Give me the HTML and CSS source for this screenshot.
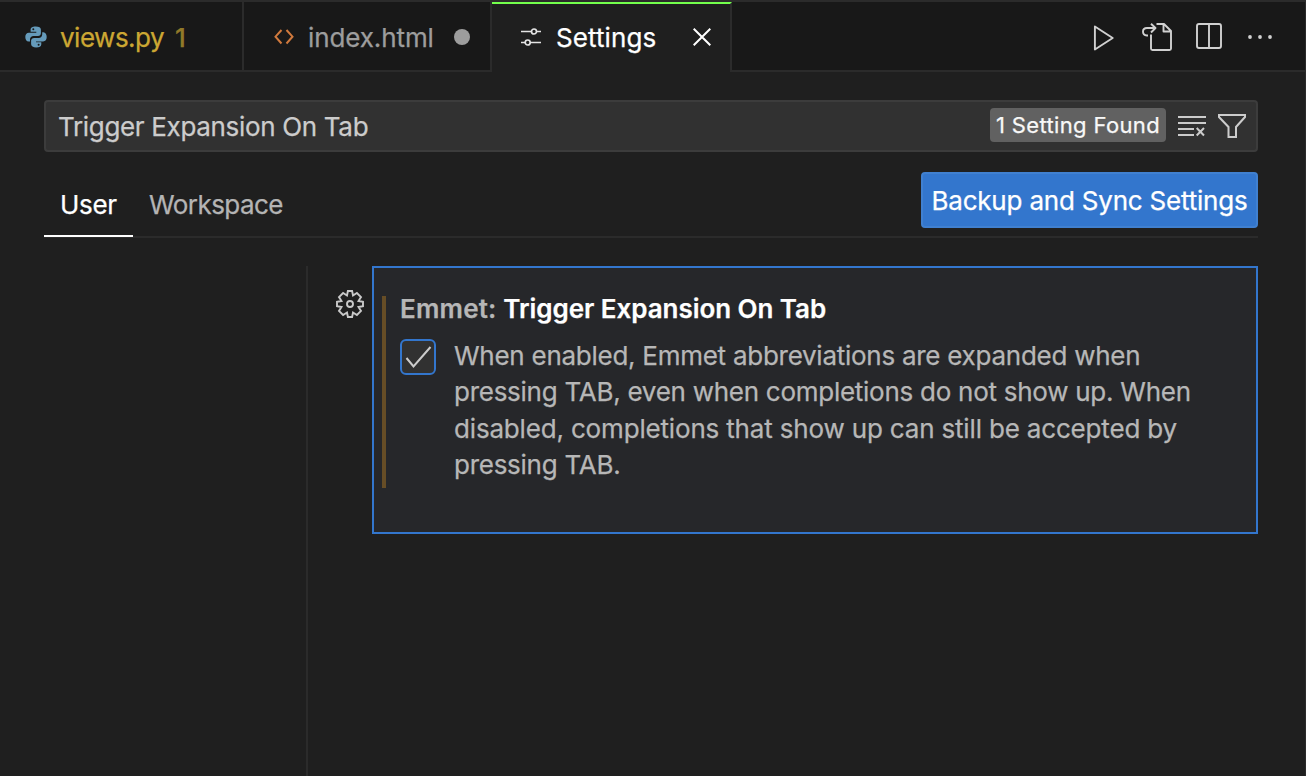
FILE: index.html
```html
<!DOCTYPE html>
<html lang="en">
<head>
<meta charset="utf-8">
<title>Settings</title>
<link rel="stylesheet" href="styles.css">
</head>
<body>
<div class="editor">
  <header class="tabbar">
    <div class="tab tab-python">
      <svg class="icon-python" width="22" height="22" viewBox="0 0 22 22">
        <path fill="#659bbb" d="M10.8.5C7 .5 5.600 1.800 5.600 3.800V5.800H11.300V6.700H4C1.500 6.700.3 8.500.3 11S1.500 15.500 3.700 15.500H5V13.200C5 11.200 6.500 9.900 8.500 9.900H13C14.800 9.900 15.900 8.700 15.900 7.200V3.800C15.900 1.600 14 .5 10.800.5Z"/>
        <path fill="#659bbb" d="M17.200 6.300V8.500C17.200 10.500 15.700 11.900 13.700 11.900H9.200C7.400 11.900 6.100 13.100 6.100 14.600V18C6.100 20.100 8.100 21.500 11.200 21.500C14.400 21.500 16.300 20.300 16.300 18.200V16.300H11V15.400H18.100C20.500 15.400 21.700 13.500 21.700 11S20.500 6.300 18.400 6.300Z"/>
        <circle cx="8.300" cy="3.300" r="1" fill="#181818"/><circle cx="13.600" cy="18.700" r="1" fill="#181818"/>
      </svg>
      <span class="name-python">views.py</span><span class="problems">1</span>
    </div>
    <div class="tab tab-html">
      <svg class="icon-html" width="20" height="16" viewBox="0 0 20 16" fill="none" stroke="#d0793d" stroke-width="2"><path d="M7.500 1 1.500 7.700 7.500 14.500M12.500 1 18.500 7.700 12.500 14.500"/></svg>
      <span class="name-html">index.html</span><span class="dirty"></span>
    </div>
    <div class="tab tab-settings">
      <svg class="icon-sliders" width="20" height="18" viewBox="0 0 20 18" fill="none" stroke="#e4e4e4" stroke-width="1.700"><path d="M0 3.500H10.400M15.600 3.500H20M0 14.500H4.200M9.300 14.500H20"/><circle cx="13" cy="3.500" r="2.500"/><circle cx="6.700" cy="14.500" r="2.500"/></svg>
      <span class="name-settings">Settings</span>
      <svg class="icon-close" width="18" height="18" viewBox="0 0 18 18" fill="none" stroke="#fff" stroke-width="2"><path d="M.7.7 17.300 17.300M17.300.7.7 17.300"/></svg>
    </div>
    <nav class="actions">
      <svg width="180" height="32" viewBox="0 0 180 32" fill="none" stroke="#d0d0d0" stroke-width="1.900" stroke-linejoin="round">
        <path d="M1.900 6.500 19.700 18 1.900 29.500Z"/>
        <path d="M58 14.500V28.500Q58 30 59.500 30H76.500Q78 30 78 28.500V11L71 4H63.500M70.500 4.300V11.500H77.500"/>
        <path d="M55 15.500H53.800Q50 15 50 11.700Q50 8 54 8H62.500M58 3.700 62.500 8 58 12.500"/>
        <rect x="104" y="4" width="24" height="24" rx="2"/><path d="M116 4V28"/>
        <g fill="#d0d0d0" stroke="none"><circle cx="157" cy="17" r="1.900"/><circle cx="167" cy="17" r="1.900"/><circle cx="177" cy="17" r="1.900"/></g>
      </svg>
    </nav>
  </header>
  <main class="settings">
    <div class="search">
      <span class="query">Trigger Expansion On Tab</span>
      <span class="badge"><span class="badge-text">1 Setting Found</span></span>
      <svg class="icon-clear" width="28" height="22" viewBox="0 0 28 22" fill="none" stroke="#ccc" stroke-width="2"><path d="M0 2H28M0 8H28M0 14H16M0 20H16M18.700 13 26 20.500M26 13 18.700 20.500"/></svg>
      <svg class="icon-filter" width="28" height="26" viewBox="0 0 28 26" fill="none" stroke="#ccc" stroke-width="2"><path d="M1 2H27V4L18 14V24H10.500V14L1 4Z"/></svg>
    </div>
    <div class="scope">
      <span class="scope-user">User</span>
      <span class="scope-workspace">Workspace</span>
      <button class="sync">Backup and Sync Settings</button>
    </div>
    <div class="content">
      <aside class="toc"></aside>
      <div class="gutter">
        <svg width="28" height="28" viewBox="0 0 28 28" fill="none" stroke="#c9c9c9" stroke-width="1.900" stroke-linejoin="miter"><path d="M11.900 1H16.100L17 5.500 20.900 3 25 7.100 22.500 11 27 11.900V16.100L22.500 17 25 20.900 20.900 25 17 22.500 16.100 27H11.900L11 22.500 7.100 25 3 20.900 5.500 17 1 16.100V11.900L5.500 11 3 7.100 7.100 3 11 5.500Z"/><circle cx="14" cy="14" r="3"/></svg>
      </div>
      <section class="setting">
        <div class="modified"></div>
        <div class="setting-main">
          <h1 class="title"><span class="category">Emmet: </span>Trigger Expansion On Tab</h1>
          <div class="value">
            <span class="checkbox"><svg width="32" height="32" viewBox="0 0 32 32" fill="none" stroke="#ccc" stroke-width="2"><path d="M4.500 17 11.500 25.500 28.500 6"/></svg></span>
            <p class="description">When enabled, Emmet abbreviations are expanded when<br>pressing TAB, even when completions do not show up. When<br><span class="wide-line">disabled, completions that show up can still be accepted by</span><br>pressing TAB.</p>
          </div>
        </div>
      </section>
    </div>
  </main>
</div>
</body>
</html>
```
FILE: styles.css
```css
* { box-sizing: border-box; }
body { margin: 0; background: #1f1f1f; font-family: Inter, "Liberation Sans", sans-serif; font-size: 26px; color: #ccc; overflow: hidden; -webkit-text-stroke: 0.25px currentColor; }
svg { display: block; flex: none; }
span { white-space: nowrap; }
.editor { width: 1306px; height: 776px; display: flex; flex-direction: column; border-right: 1px solid #2b2b2b; }
.tabbar { display: flex; height: 72px; flex: none; background: #181818; border-top: 2px solid #2b2b2b; }
.tab { display: flex; align-items: center; border-right: 2px solid #2b2b2b; border-bottom: 2px solid #2b2b2b; flex: none; padding-top: 2px; }
.tab-python { width: 244px; padding-left: 25px; }
.name-python { margin-left: 13px; color: #cca733; width: 115px; letter-spacing: -0.5px; }
.problems { color: #917929; font-weight: 500; }
.tab-html { width: 248px; padding-left: 30px; color: #9d9d9d; }
.name-html { margin-left: 14px; width: 146px; letter-spacing: -0.1px; }
.dirty { width: 16px; height: 16px; border-radius: 50%; background: #9d9d9d; }
.tab-settings { width: 240px; padding: 0 0 2px 29px; border-top: 2px solid #73ff4c; border-bottom: 0; background: #1f1f1f; color: #fff; }
.name-settings { margin-left: 15px; width: 137px; letter-spacing: 0.1px; }
.actions { flex: 1; border-bottom: 2px solid #2b2b2b; padding: 18px 0 0 361px; }
.settings { flex: 1; display: flex; flex-direction: column; padding: 28px 47px 0 44px; }
.search { height: 52px; flex: none; display: flex; align-items: center; border: 2px solid #3c3c3c; border-radius: 4px; background: #313131; padding-left: 12px; }
.query { flex: 1; letter-spacing: -0.33px; }
.badge { width: 176px; height: 34px; border-radius: 4px; background: #616161; color: #f8f8f8; font-size: 22px; letter-spacing: 0.35px; display: flex; align-items: center; justify-content: center; margin-bottom: 2px; }
.icon-clear { margin-left: 12px; }
.icon-filter { margin: 0 10px 0 12px; }
.scope { height: 86px; flex: none; display: flex; border-bottom: 2px solid #2b2b2b; }
.scope-user { width: 89px; height: 85px; display: flex; padding: 37px 0 0 16px; color: #fff; border-bottom: 2px solid #fff; letter-spacing: -0.3px; }
.scope-workspace { padding: 37px 0 0 16px; color: #b4b4b4; flex: 1; letter-spacing: -0.55px; }
.sync { width: 337px; height: 56px; margin-top: 20px; padding: 0; font: inherit; letter-spacing: -0.2px; color: #fff; background: #3376cd; border: 2px solid #4080d0; border-radius: 4px; }
.content { flex: 1; display: flex; padding-top: 28px; }
.toc { width: 264px; border-right: 2px solid #2b2b2b; }
.gutter { width: 64px; padding: 24px 0 0 28px; }
.setting { flex: 1; height: 268px; display: flex; border: 2px solid #3376cd; background: #26272a; padding: 28px 0 0 8px; }
.modified { width: 4px; height: 192px; background: #664d26; flex: none; }
.setting-main { padding-left: 14px; }
.title { margin: 0; font-size: 26px; line-height: 26px; font-weight: 600; color: #fff; white-space: pre; letter-spacing: -0.05px; }
.category { color: #b7b7b7; white-space: pre; letter-spacing: 0.2px; }
.value { display: flex; margin-top: 17px; }
.checkbox { width: 36px; height: 36px; border: 2px solid #3376cd; border-radius: 6px; background: #313131; flex: none; }
.description { margin: -1px 0 0 18px; line-height: 36.4px; color: #b7b7b7; white-space: nowrap; letter-spacing: -0.265px; }
.wide-line { letter-spacing: -0.17px; }
```
